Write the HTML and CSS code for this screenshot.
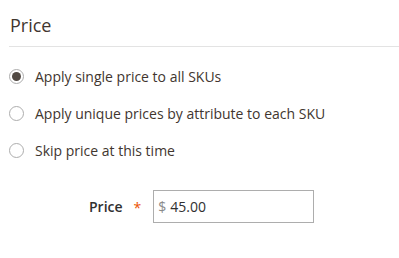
FILE: index.html
```html
<!DOCTYPE html>
<html>
<head>
<meta charset="utf-8">
<link rel="stylesheet" href="styles.css">
</head>
<body>
<div class="section">
  <h2 class="title">Price</h2>
  <div class="options">
    <label class="option"><span class="radio checked"></span><span class="text">Apply single price to all SKUs</span></label>
    <label class="option"><span class="radio"></span><span class="text">Apply unique prices by attribute to each SKU</span></label>
    <label class="option"><span class="radio"></span><span class="text">Skip price at this time</span></label>
  </div>
  <div class="field">
    <span class="label">Price</span>
    <span class="req">*</span>
    <div class="input"><span class="cur">$</span><span class="val">45.00</span></div>
  </div>
</div>
</body>
</html>
```
FILE: styles.css
```css
html, body {
  margin: 0;
  padding: 0;
  background: #fff;
}
body {
  font-family: "Open Sans", "Liberation Sans", sans-serif;
  color: #41362f;
  width: 399px;
  height: 258px;
  overflow: hidden;
}
.section {
  padding-left: 9px;
}
.title {
  margin: 0;
  font-size: 18px;
  font-weight: 400;
  line-height: 24px;
  padding-top: 13px;
  padding-left: 1px;
  padding-bottom: 9px;
  border-bottom: 1px solid #e3e3e3;
  color: #41362f;
}
.options {
  display: flex;
  flex-direction: column;
  padding-top: 19px;
  gap: 17px;
}
.option {
  display: flex;
  align-items: center;
  height: 20px;
  font-size: 14px;
  color: #41362f;
}
.radio {
  box-sizing: border-box;
  width: 15px;
  height: 15px;
  border: 1px solid #adadad;
  border-radius: 50%;
  margin-right: 11px;
  display: flex;
  align-items: center;
  justify-content: center;
  background: #fff;
}
.radio.checked::after {
  content: "";
  width: 9px;
  height: 9px;
  border-radius: 50%;
  background: #514943;
}
.field {
  display: flex;
  align-items: center;
  margin-top: 30px;
  padding-left: 80px;
}
.label {
  font-size: 14px;
  font-weight: 600;
  color: #303030;
}
.req {
  color: #eb5202;
  font-size: 14px;
  margin-left: 11px;
  margin-right: 12px;
  position: relative;
  top: 1px;
}
.input {
  box-sizing: border-box;
  width: 161px;
  height: 33px;
  border: 1px solid #adadad;
  display: flex;
  align-items: center;
  padding-left: 4px;
  font-size: 14px;
}
.cur {
  color: #8a8a8a;
  margin-right: 4px;
}
.val {
  color: #303030;
}
```
